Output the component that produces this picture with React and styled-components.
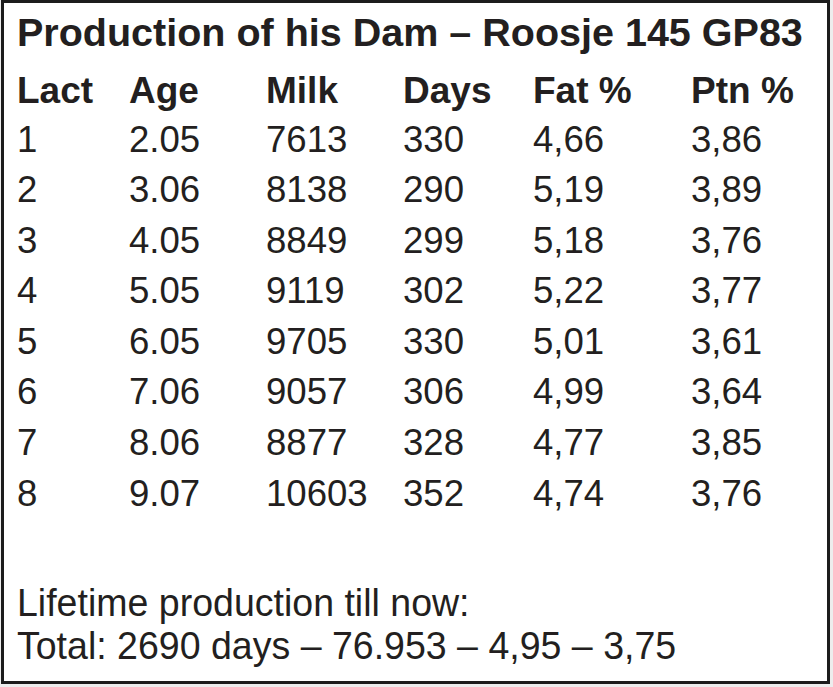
import React from "react";
import styled, { createGlobalStyle } from "styled-components";

const GlobalStyle = createGlobalStyle`
  html, body {
    margin: 0;
    padding: 0;
    background: #ededed;
  }
  body {
    width: 833px;
    height: 687px;
    overflow: hidden;
  }
`;

const Card = styled.div`
  box-sizing: border-box;
  margin-left: 1px;
  width: 829px;
  height: 684px;
  border: 3.5px solid #1c1c1c;
  background: #fff;
  padding: 4px 0 0 13px;
  color: #231f20;
  font-family: "Liberation Sans", Arial, sans-serif;
`;

const Title = styled.h1`
  margin: 0;
  font-size: 39.5px;
  line-height: 50px;
  font-weight: 700;
  white-space: nowrap;
`;

const Row = styled.div`
  display: grid;
  grid-template-columns: 112px 137px 137px 130px 158px 1fr;
  font-size: ${(p) => (p.head ? "37px" : "36.6px")};
  font-weight: ${(p) => (p.head ? 700 : 400)};
  line-height: ${(p) => (p.head ? "49px" : "50.6px")};
  margin-top: ${(p) => (p.head ? "8.5px" : "0")};
  white-space: nowrap;
`;

const Footer = styled.div`
  margin-top: 62px;
  font-size: 39px;
  line-height: 43px;
  white-space: nowrap;
`;

// the footer lines are set narrower than the table text
const FooterLine = styled.div`
  transform: scaleX(0.962);
  transform-origin: left center;
`;

const heads = ["Lact", "Age", "Milk", "Days", "Fat %", "Ptn %"];

const rows = [
  ["1", "2.05", "7613", "330", "4,66", "3,86"],
  ["2", "3.06", "8138", "290", "5,19", "3,89"],
  ["3", "4.05", "8849", "299", "5,18", "3,76"],
  ["4", "5.05", "9119", "302", "5,22", "3,77"],
  ["5", "6.05", "9705", "330", "5,01", "3,61"],
  ["6", "7.06", "9057", "306", "4,99", "3,64"],
  ["7", "8.06", "8877", "328", "4,77", "3,85"],
  ["8", "9.07", "10603", "352", "4,74", "3,76"],
];

export default function App() {
  return (
    <>
      <GlobalStyle />
      <Card>
        <Title>Production of his Dam – Roosje 145 GP83</Title>
        <Row head>
          {heads.map((h) => (
            <span key={h}>{h}</span>
          ))}
        </Row>
        {rows.map((r) => (
          <Row key={r[0]}>
            {r.map((v, i) => (
              <span key={i}>{v}</span>
            ))}
          </Row>
        ))}
        <Footer>
          <FooterLine>Lifetime production till now:</FooterLine>
          <FooterLine>Total: 2690 days – 76.953 – 4,95 – 3,75</FooterLine>
        </Footer>
      </Card>
    </>
  );
}
